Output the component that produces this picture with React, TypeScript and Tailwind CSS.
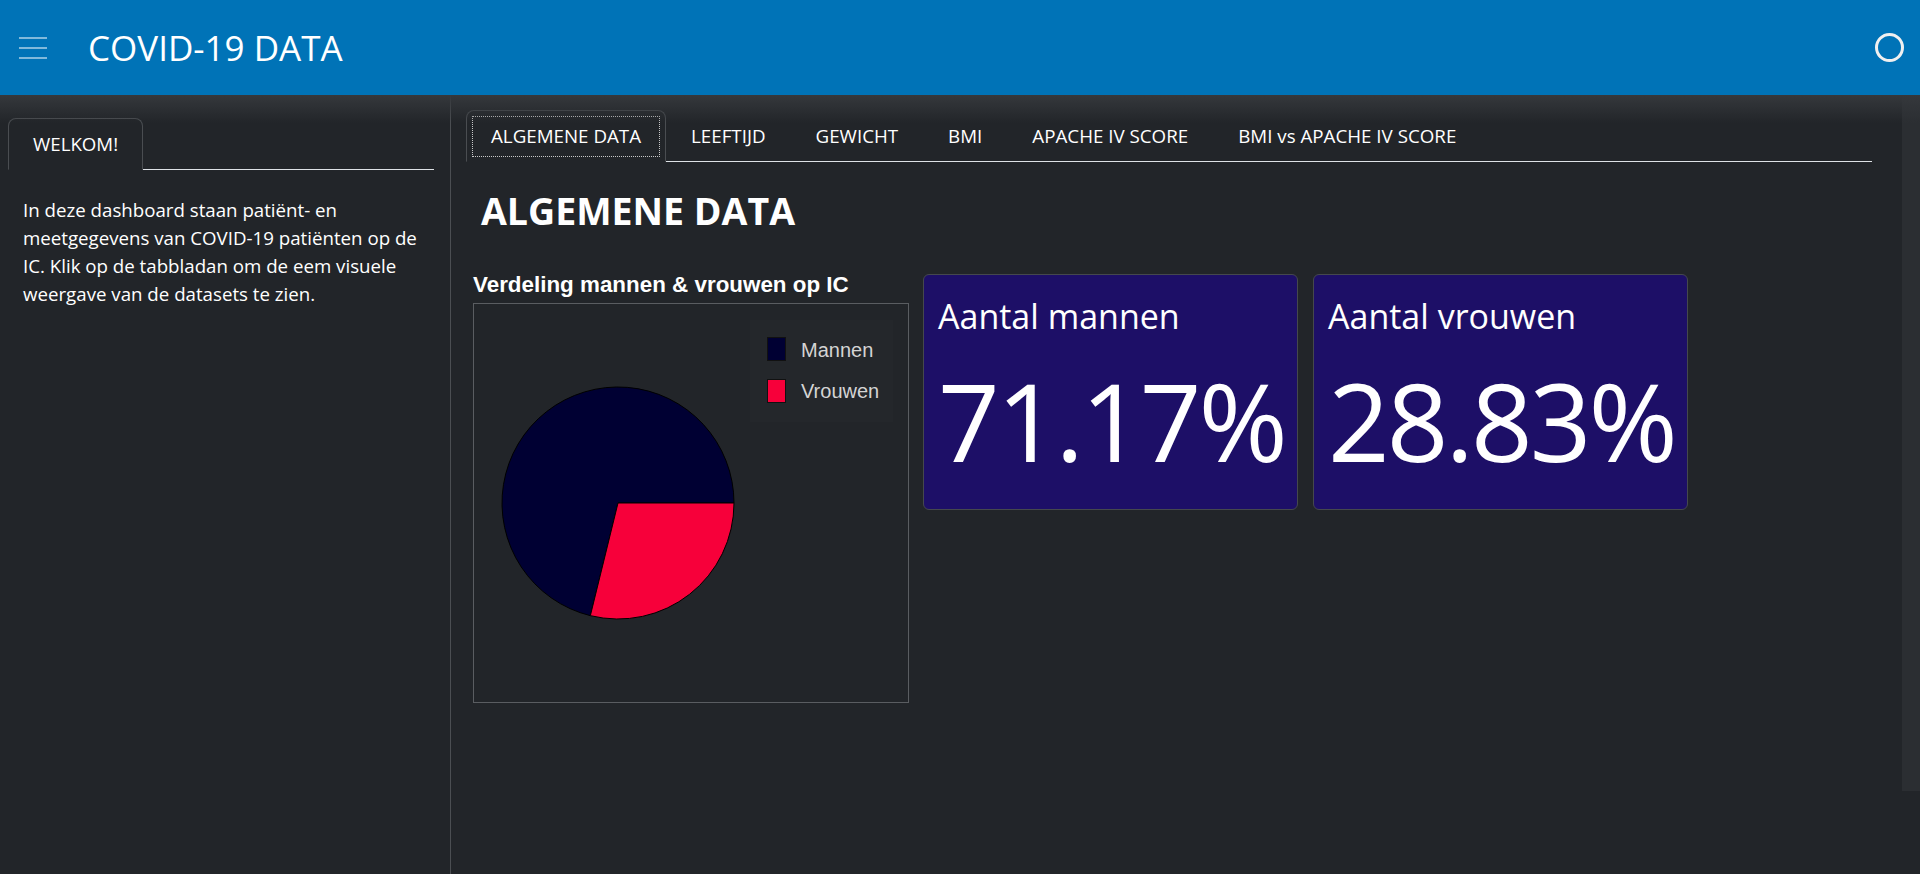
import React from "react";

const mainTabs = ["ALGEMENE DATA", "LEEFTIJD", "GEWICHT", "BMI", "APACHE IV SCORE", "BMI vs APACHE IV SCORE"];

// Pie share for women, used to compute the slice end point
const womenPct = 28.83;

function PieChart() {
    const cx = 144;
    const cy = 199;
    const r = 116;
    const angle = (womenPct / 100) * Math.PI * 2;
    const ex = cx + r * Math.cos(angle);
    const ey = cy + r * Math.sin(angle);

    return (
        <svg width="434" height="398" viewBox="0 0 434 398" className="block">
            <path d={`M${cx},${cy} L${ex},${ey} A${r},${r} 0 1 1 ${cx + r},${cy} Z`} fill="#000033" stroke="#000" strokeWidth="1" />
            <path d={`M${cx},${cy} L${cx + r},${cy} A${r},${r} 0 0 1 ${ex},${ey} Z`} fill="#f7003a" stroke="#000" strokeWidth="1" />
            <rect x="276" y="16" width="143" height="102" fill="#24272b" />
            <rect x="293.5" y="33.5" width="18" height="23" fill="#000033" stroke="#111" strokeWidth="1" />
            <rect x="293.5" y="75.5" width="18" height="23" fill="#f7003a" stroke="#111" strokeWidth="1" />
            <text x="327" y="53" fontFamily="'Liberation Sans', Arial, sans-serif" fontSize="20" fill="#d4d4d4">Mannen</text>
            <text x="327" y="94" fontFamily="'Liberation Sans', Arial, sans-serif" fontSize="20" fill="#d4d4d4">Vrouwen</text>
        </svg>
    );
}

function StatCard({ title, value }: { title: string; value: string }) {
    return (
        <div className="w-[375px] h-[236px] bg-[#1d0f67] border border-[#45484d] rounded-[6px] px-[14px] pt-[21px]">
            <div className="text-[34px] leading-[40px] text-white">{title}</div>
            <div className="mt-[31px] text-[108px] leading-[108px] tracking-[-3px] text-white">{value}</div>
        </div>
    );
}

export default function App() {
    return (
        <div className="h-[874px] bg-[#222529] flex flex-col overflow-hidden font-['Open_Sans','Noto_Sans',sans-serif] text-white">
            {/* Header */}
            <header className="h-[95px] shrink-0 bg-[#0073b7] flex items-center pl-[19px] pr-[16px]">
                <div className="flex flex-col gap-[8px] w-[28px]">
                    <span className="h-[2px] bg-[#80b9db]" />
                    <span className="h-[2px] bg-[#80b9db]" />
                    <span className="h-[2px] bg-[#80b9db]" />
                </div>
                <h1 className="ml-[41px] text-[35px] leading-none text-white">COVID-19 DATA</h1>
                <div className="ml-auto w-[29px] h-[29px] rounded-full border-[3px] border-[#f0f0f0]" />
            </header>

            <div className="flex flex-1 relative">
                <div className="pointer-events-none absolute inset-x-0 top-0 h-[28px] bg-gradient-to-b from-[#35383c] to-transparent" />

                {/* Sidebar */}
                <aside className="w-[451px] shrink-0 border-r border-[#4b4e52] pl-2 pr-[16px] pt-[23px]">
                    <div className="flex border-b border-[#dee2e6]">
                        <div className="-mb-px h-[52px] flex items-center px-[24px] border border-[#4a4d51] border-b-[#222529] rounded-t-[8px] bg-[#222529] text-[18.7px]">
                            WELKOM!
                        </div>
                    </div>
                    <p className="mt-[26px] pl-[15px] text-[18.7px] leading-[28px] text-white">
                        In deze dashboard staan patiënt- en meetgegevens van COVID-19 patiënten op de IC. Klik op de tabbladan om de eem visuele weergave van de datasets te zien.
                    </p>
                </aside>

                {/* Main */}
                <main className="flex-1 flex">
                    <div className="flex-1 pl-[15px] pr-[30px] pt-[15px]">
                        <div className="flex border-b border-[#dee2e6]">
                            {mainTabs.map((tab, i) =>
                                i === 0 ? (
                                    <div key={tab} className="-mb-px h-[52px] p-[5px] pb-[4px] border border-[#4a4d51] border-b-[#222529] rounded-t-[8px] bg-[#222529]">
                                        <div className="h-full flex items-center px-[18px] border border-dotted border-[#c8c8c8] text-[18.75px]">
                                            {tab}
                                        </div>
                                    </div>
                                ) : (
                                    <div key={tab} className="-mb-px h-[52px] flex items-center px-[24px] border border-transparent text-[18.75px]">
                                        {tab}
                                    </div>
                                )
                            )}
                        </div>

                        <h2 className="mt-[27px] ml-[15px] text-[37.5px] leading-[44px] font-bold">ALGEMENE DATA</h2>

                        <div className="mt-[41px] ml-[7px] flex items-start">
                            <div className="w-[436px]">
                                <div className="font-['Liberation_Sans',Arial,sans-serif] font-bold text-[22.4px] leading-[21px] text-white">
                                    Verdeling mannen &amp; vrouwen op IC
                                </div>
                                <div className="mt-[8px] h-[400px] border border-[#5a5d61]">
                                    <PieChart />
                                </div>
                            </div>
                            <div className="ml-[14px] flex gap-[15px]">
                                <StatCard title="Aantal mannen" value="71.17%" />
                                <StatCard title="Aantal vrouwen" value="28.83%" />
                            </div>
                        </div>
                    </div>
                    <div className="w-[18px] h-[696px] bg-[#2b2e32] shrink-0" />
                </main>
            </div>
        </div>
    );
}
